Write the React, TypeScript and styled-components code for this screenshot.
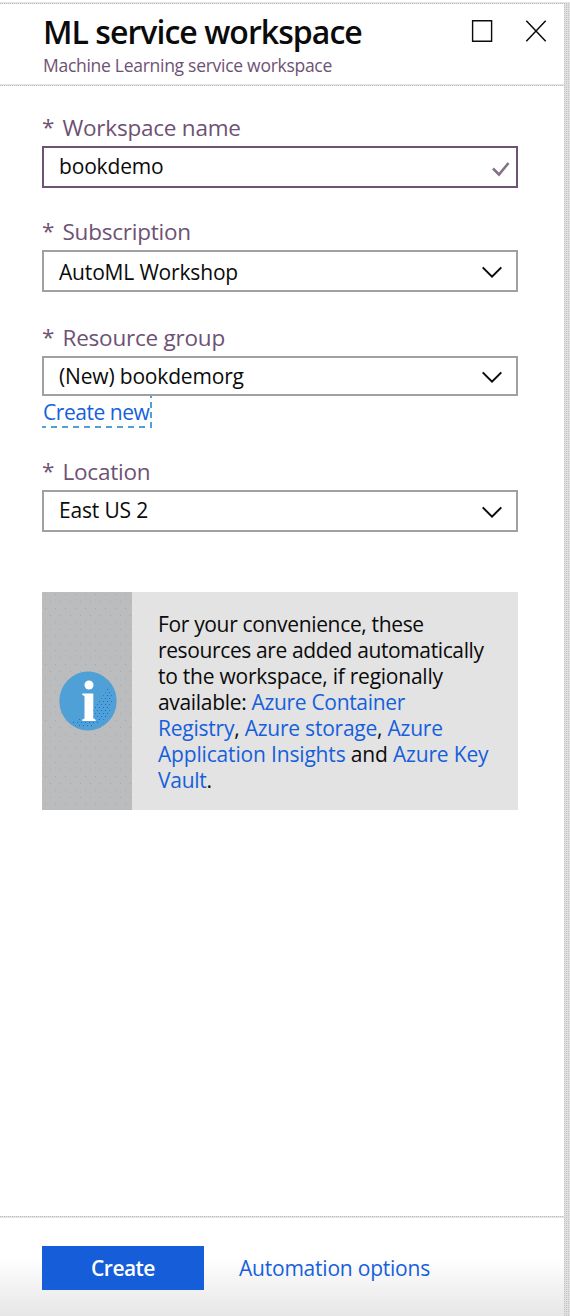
import React from "react";
import styled, { createGlobalStyle } from "styled-components";

const ink = "#0b0b0b";
const plum = "#6e5174";
const link = "#165fdc";

const GlobalStyle = createGlobalStyle`
  *, *::before, *::after { box-sizing: border-box; }
  html, body { margin: 0; padding: 0; background: #fff; }
  body { font-family: "Open Sans", "Noto Sans", sans-serif; color: ${ink}; }
`;

const Page = styled.div`
  width: 570px;
  height: 1316px;
  padding-top: 2px;
  display: flex;
  flex-direction: column;
  overflow: hidden;
  background: #fff;
`;

const Rule = styled.div<{ $flip?: boolean }>`
  flex: none;
  height: 2px;
  background:
    repeating-linear-gradient(90deg, #bcbcbc 0 1px, transparent 1px 2px) 0 ${(p) => (p.$flip ? "0" : "1px")} / 100% 1px no-repeat,
    #e4e4e4;
`;

const Columns = styled.div`
  flex: 1;
  min-height: 0;
  display: flex;
`;

const Blade = styled.main`
  width: 564px;
  display: flex;
  flex-direction: column;
`;

const Edge = styled.div`
  width: 6px;
  background:
    repeating-linear-gradient(180deg, #e0e0e0 0 1px, transparent 1px 2px),
    repeating-linear-gradient(90deg, #c2c2c2 0 1px, #e0e0e0 1px 2px) 0 0 / 5px 100% no-repeat,
    #e0e0e0;
`;

const Header = styled.header`
  height: 80px;
  padding: 8px 17px 0 43px;
  display: flex;
  justify-content: space-between;
`;

const Title = styled.h1`
  margin: 0;
  font-size: 32px;
  line-height: 40px;
  font-weight: 600;
  letter-spacing: -0.95px;
  white-space: nowrap;
`;

const Subtitle = styled.p`
  margin: 0;
  padding-top: 1px;
  font-size: 17.5px;
  line-height: 24px;
  letter-spacing: -0.28px;
  color: ${plum};
  white-space: nowrap;
`;

const WindowButtons = styled.div`
  display: flex;
  gap: 32px;
  padding-top: 8px;
`;

const Form = styled.section`
  height: 1130px;
  padding: 26px 46px 0 42px;
`;

const Field = styled.div<{ $height: number }>`
  height: ${(p) => p.$height}px;
`;

const Label = styled.label`
  display: flex;
  gap: 7.5px;
  height: 34px;
  font-size: 22.5px;
  line-height: 31px;
  letter-spacing: -0.22px;
  color: ${plum};
  white-space: nowrap;
`;

const Star = styled.span`
  width: 13px;
  line-height: 29px;
`;

const Box = styled.div<{ $valid?: boolean; $height?: number }>`
  height: ${(p) => p.$height ?? 42}px;
  border: 2px solid ${(p) => (p.$valid ? plum : "#a0a0a0")};
  padding: 0 ${(p) => (p.$valid ? 5 : 14)}px 0 15px;
  display: flex;
  justify-content: space-between;
  align-items: center;
  font-size: 21px;
`;

const Value = styled.span<{ $top?: number; $bottom?: number }>`
  line-height: 30px;
  letter-spacing: -0.17px;
  padding-top: ${(p) => p.$top ?? 0}px;
  padding-bottom: ${(p) => p.$bottom ?? 0}px;
  white-space: nowrap;
`;

const CreateNew = styled.a`
  display: block;
  width: 110px;
  height: 32px;
  padding-left: 1px;
  font-size: 21px;
  line-height: 32px;
  letter-spacing: -0.45px;
  color: ${link};
  white-space: nowrap;
  background:
    repeating-linear-gradient(90deg, #50a0d8 0 6px, transparent 6px 11px) -2px 100% / 112px 2px no-repeat,
    repeating-linear-gradient(0deg, #50a0d8 0 6px, transparent 6px 10px) 100% 0 / 2px 100% no-repeat;
`;

const Notice = styled.aside`
  height: 218px;
  display: flex;
  background: #e3e3e3;
`;

const NoticeSide = styled.div`
  width: 90px;
  display: flex;
  align-items: center;
  justify-content: center;
  padding-left: 2px;
  background:
    radial-gradient(circle at 0.5px 0.5px, #a6a7a8 0.6px, transparent 0.6px) 8px 9px / 10px 14px,
    radial-gradient(circle at 0.5px 0.5px, #a6a7a8 0.6px, transparent 0.6px) 3px 2px / 10px 14px,
    #bbbcbd;
`;

const NoticeText = styled.div`
  padding: 19px 0 0 26px;
  font-size: 21px;
  line-height: 26px;
  white-space: nowrap;
`;

const Line = styled.div<{ $spacing: number }>`
  letter-spacing: ${(p) => p.$spacing}px;
`;

const Link = styled.a`
  color: ${link};
`;

const Footer = styled.footer`
  flex: 1;
  display: flex;
  align-items: flex-start;
  gap: 35px;
  padding: 28px 0 0 42px;
  background: linear-gradient(180deg, #fff 40px, #f7f7f7 58px, #e6e6e6 98px);
`;

const CreateButton = styled.button`
  width: 162px;
  height: 44px;
  border: 0;
  padding: 0;
  background: #165dd9;
  color: #fff;
  font: 600 21px/44px "Open Sans", sans-serif;
  letter-spacing: -0.55px;
`;

const Options = styled.a`
  font-size: 21px;
  line-height: 44px;
  letter-spacing: -0.22px;
  color: ${link};
`;

const ChevronIcon = styled.svg`
  margin-top: 3px;
`;

const CheckIcon = styled.svg`
  margin-top: 4px;
`;

const Chevron = () => (
  <ChevronIcon width="20" height="13" viewBox="0 0 20 13" fill="none" stroke={ink} strokeWidth="2">
    <path d="M0.7 1.4 L10 10.6 L19.3 1.4" />
  </ChevronIcon>
);

export default function App() {
  return (
    <Page>
      <GlobalStyle />
      <Rule />
      <Columns>
        <Blade>
          <Header>
            <div>
              <Title>ML service workspace</Title>
              <Subtitle>Machine Learning service workspace</Subtitle>
            </div>
            <WindowButtons>
              <svg width="22" height="22" viewBox="0 0 22 22" fill="none" stroke={ink} strokeWidth="1.4">
                <path d="M1.6 0.7 H20.6 V21.3 H1.6 Z" />
              </svg>
              <svg width="22" height="22" viewBox="0 0 22 22" fill="none" stroke={ink} strokeWidth="1.5">
                <path d="M1.3 0.7 L20.7 21.3 M20.7 0.7 L1.3 21.3" />
              </svg>
            </WindowButtons>
          </Header>
          <Rule />
          <Form>
            <Field $height={104}>
              <Label><Star>*</Star>Workspace name</Label>
              <Box $valid>
                <Value $bottom={2}>bookdemo</Value>
                <CheckIcon width="20" height="18" viewBox="0 0 20 18" fill="none" stroke="#84708a" strokeWidth="2.6">
                  <path d="M2 8.5 L8 14.5 L17.5 3" />
                </CheckIcon>
              </Box>
            </Field>
            <Field $height={106}>
              <Label><Star>*</Star>Subscription</Label>
              <Box>
                <Value $top={2}>AutoML Workshop</Value>
                <Chevron />
              </Box>
            </Field>
            <Field $height={134}>
              <Label><Star>*</Star>Resource group</Label>
              <Box $height={40}>
                <Value>(New) bookdemorg</Value>
                <Chevron />
              </Box>
              <CreateNew>Create new</CreateNew>
            </Field>
            <Field $height={136}>
              <Label><Star>*</Star>Location</Label>
              <Box>
                <Value $bottom={2}>East US 2</Value>
                <Chevron />
              </Box>
            </Field>
            <Notice>
              <NoticeSide>
                <svg width="58" height="60" viewBox="0 0 58 60">
                  <defs>
                    <pattern id="speckle" width="4" height="6" patternUnits="userSpaceOnUse">
                      <path d="M0 0h1v1h-1z M2 3h1v1h-1z" fill="#1f66da" />
                    </pattern>
                  </defs>
                  <ellipse cx="29" cy="30" rx="28.7" ry="29.5" fill="#50a0d8" />
                  <path d="M50 15 A27 28 0 0 1 12 52 Q36 42 50 15 Z" fill="url(#speckle)" />
                  <circle cx="30" cy="14" r="4.5" fill="#fff" />
                  <path d="M23.3 22.5 H34.3 V47.5 L36.7 48.5 V50 H23.3 V48.5 L25.5 47.5 V25 L23.3 24 Z" fill="#fff" />
                </svg>
              </NoticeSide>
              <NoticeText>
                <Line $spacing={-0.34}>For your convenience, these</Line>
                <Line $spacing={-0.38}>resources are added automatically</Line>
                <Line $spacing={-0.24}>to the workspace, if regionally</Line>
                <Line $spacing={-0.32}>available: <Link>Azure Container</Link></Line>
                <Line $spacing={-0.23}><Link>Registry</Link>, <Link>Azure storage</Link>, <Link>Azure</Link></Line>
                <Line $spacing={-0.17}><Link>Application Insights</Link> and <Link>Azure Key</Link></Line>
                <Line $spacing={-0.25}><Link>Vault</Link>.</Line>
              </NoticeText>
            </Notice>
          </Form>
          <Rule $flip />
          <Footer>
            <CreateButton>Create</CreateButton>
            <Options>Automation options</Options>
          </Footer>
        </Blade>
        <Edge />
      </Columns>
    </Page>
  );
}
